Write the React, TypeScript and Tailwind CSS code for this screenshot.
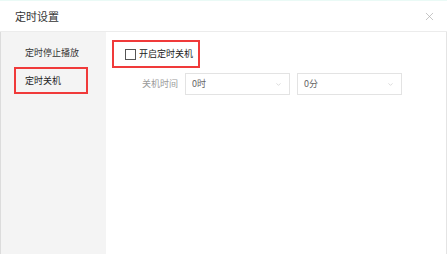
import { ChevronDown, X } from 'lucide-react';

const font = { fontFamily: '"Noto Sans CJK SC", "Noto Sans", sans-serif' };

function Select({ value }: { value: string }) {
  return (
    <div className="flex h-[22px] w-[105px] items-center justify-between border border-[#e3e3e3] bg-white pl-[6px] pr-[7px] text-[9px] text-[#666]">
      <span>{value}</span>
      <ChevronDown size={7} className="text-[#c4c4c4]" />
    </div>
  );
}

export default function App() {
  return (
    <div style={font} className="relative flex h-[254px] w-[447px] flex-col overflow-hidden bg-white">
      {/* top edge tint */}
      <div className="h-px w-full bg-[#eafaf6]" />

      {/* header */}
      <div className="flex h-[31px] items-center justify-between border-b border-[#ececec] pl-[15px] pr-[11px]">
        <span className="whitespace-nowrap text-[11px] text-[#333]">定时设置</span>
        <X size={13} strokeWidth={1.2} className="text-[#a8a8a8]" />
      </div>

      <div className="flex flex-1">
        {/* sidebar */}
        <div className="flex w-[106px] flex-col border-l border-[#dcdcdc] bg-[#f4f4f4] pt-[14px]">
          <div className="whitespace-nowrap pl-[24px] text-[9px] leading-[14px] text-[#333]">定时停止播放</div>
          <div className="ml-[13px] mt-[7px] flex h-[27px] w-[74px] items-center whitespace-nowrap border-2 border-[#f03a3a] pl-[9px] text-[9px] text-[#222]">
            定时关机
          </div>
        </div>

        {/* main */}
        <div className="flex flex-1 flex-col pl-[6px] pt-[8px]">
          <div className="flex h-[28px] w-[88px] items-center border-2 border-[#f03a3a] pl-[11px]">
            <span className="h-[11px] w-[11px] shrink-0 border border-[#555] bg-white" />
            <span className="ml-[3px] whitespace-nowrap text-[9px] text-[#222]">开启定时关机</span>
          </div>
          <div className="mt-[5px] flex items-center">
            <span className="ml-[30px] w-[43px] whitespace-nowrap text-[9px] text-[#9a9a9a]">关机时间</span>
            <Select value="0时" />
            <div className="w-[7px]" />
            <Select value="0分" />
          </div>
        </div>

        {/* right scrollbar edge */}
        <div className="w-px bg-[#e4e4e4]" />
      </div>
    </div>
  );
}
